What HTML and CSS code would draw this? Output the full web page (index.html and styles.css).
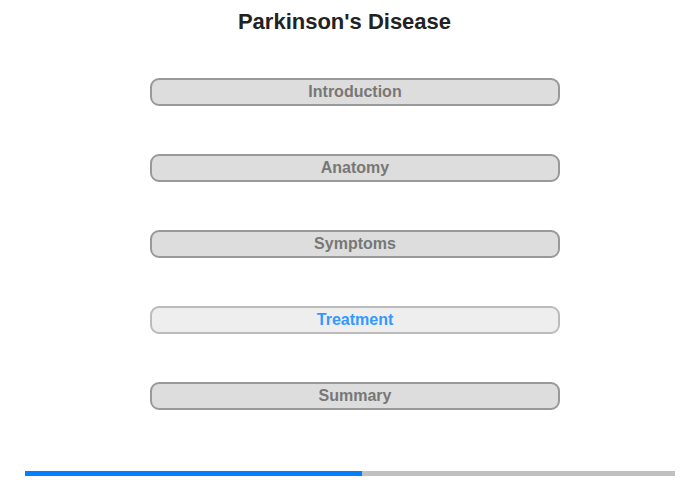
FILE: index.html
```html
<!DOCTYPE html>
<html>
<head>
<meta charset="utf-8">
<link rel="stylesheet" href="styles.css">
</head>
<body>
<div class="page">
  <h1 class="title">Parkinson's Disease</h1>
  <nav class="menu">
    <div class="item">Introduction</div>
    <div class="item">Anatomy</div>
    <div class="item">Symptoms</div>
    <div class="item active">Treatment</div>
    <div class="item">Summary</div>
  </nav>
  <div class="progress"><div class="progress-fill" style="width:337px"></div></div>
</div>
</body>
</html>
```
FILE: styles.css
```css
html, body {
  margin: 0;
  padding: 0;
  background: #fff;
}
.page {
  width: 700px;
  height: 480px;
  display: flex;
  flex-direction: column;
  font-family: "Liberation Sans", Arial, sans-serif;
}
.title {
  margin: 0;
  height: 44px;
  line-height: 44px;
  font-size: 22px;
  font-weight: bold;
  color: #222;
  text-align: center;
  padding-right: 11px;
}
.menu {
  margin-top: 34px;
  margin-left: 150px;
  width: 410px;
  display: flex;
  flex-direction: column;
  gap: 48px;
}
.item {
  box-sizing: border-box;
  height: 28px;
  line-height: 24px;
  border: 2px solid #999;
  border-radius: 9px;
  background: #ddd;
  color: #777;
  font-size: 16px;
  font-weight: bold;
  text-align: center;
}
.item.active {
  background: #eee;
  border-color: #bbb;
  color: #3399ff;
}
.progress {
  margin-top: 61px;
  margin-left: 25px;
  width: 650px;
  height: 5px;
  background: #c0c0c0;
}
.progress-fill {
  height: 100%;
  background: #0080ff;
}
```
